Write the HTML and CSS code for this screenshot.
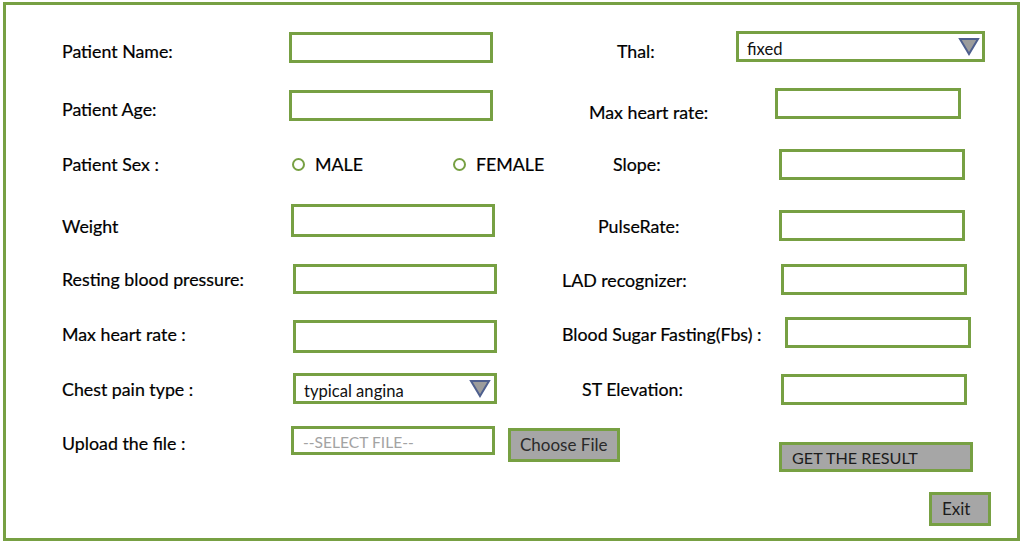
FILE: index.html
```html
<!DOCTYPE html>
<html lang="en">
<head>
<meta charset="utf-8">
<title>Heart Disease Prediction Form</title>
<link rel="stylesheet" href="styles.css">
</head>
<body>
<div class="frame">
  <div class="row r1">
    <span class="lab lab-l">Patient Name:</span>
    <input class="field in1" type="text">
    <span class="lab lab-r">Thal:</span>
    <div class="field dropdown in2 thal"><span class="val">fixed</span><svg class="tri" width="22" height="19" viewBox="0 0 22 19"><polygon points="2,2 20,2 11,17" fill="#9c9c9c" stroke="#4e5f8e" stroke-width="2" stroke-linejoin="miter"/></svg></div>
  </div>
  <div class="row r2">
    <span class="lab lab-l">Patient Age:</span>
    <input class="field in1" type="text">
    <span class="lab lab-r">Max heart rate:</span>
    <input class="field in2" type="text">
  </div>
  <div class="row r3">
    <span class="lab lab-l">Patient Sex :</span>
    <div class="radios">
      <span class="radio male"><span class="dot"></span>MALE</span>
      <span class="radio"><span class="dot"></span>FEMALE</span>
    </div>
    <span class="lab lab-r">Slope:</span>
    <input class="field in2" type="text">
  </div>
  <div class="row r4">
    <span class="lab lab-l">Weight</span>
    <input class="field in1" type="text">
    <span class="lab lab-r">PulseRate:</span>
    <input class="field in2" type="text">
  </div>
  <div class="row r5">
    <span class="lab lab-l">Resting blood pressure:</span>
    <input class="field in1" type="text">
    <span class="lab lab-r">LAD recognizer:</span>
    <input class="field in2" type="text">
  </div>
  <div class="row r6">
    <span class="lab lab-l">Max heart rate :</span>
    <input class="field in1" type="text">
    <span class="lab lab-r">Blood Sugar Fasting(Fbs) :</span>
    <input class="field in2" type="text">
  </div>
  <div class="row r7">
    <span class="lab lab-l">Chest pain type :</span>
    <div class="field dropdown in1 chest"><span class="val">typical angina</span><svg class="tri" width="22" height="19" viewBox="0 0 22 19"><polygon points="2,2 20,2 11,17" fill="#9c9c9c" stroke="#4e5f8e" stroke-width="2" stroke-linejoin="miter"/></svg></div>
    <span class="lab lab-r">ST Elevation:</span>
    <input class="field in2" type="text">
  </div>
  <div class="row r8">
    <span class="lab lab-l">Upload the file :</span>
    <div class="field in1 upload"><span class="placeholder">--SELECT FILE--</span></div>
    <button class="btn choose" type="button">Choose File</button>
    <button class="btn result" type="button">GET THE RESULT</button>
  </div>
  <div class="row r9">
    <button class="btn exit" type="button">Exit</button>
  </div>
</div>
</body>
</html>
```

FILE: styles.css
```css
html, body {
  margin: 0;
  padding: 0;
  background: #ffffff;
}

body {
  font-family: Lato, "Liberation Sans", sans-serif;
  color: #000000;
}

.frame {
  box-sizing: border-box;
  width: 1017px;
  height: 539px;
  margin: 2px 0 0 3px;
  border: 3px solid #77a043;
  padding: 26px 0 0 56px;
}

.row {
  display: flex;
  align-items: flex-start;
  height: var(--h);
}

.lab {
  font-size: 17.8px;
  line-height: 20px;
  white-space: nowrap;
  -webkit-text-stroke: 0.2px #000000;
  margin-top: calc(var(--cy) - 4px);
}

.lab-l {
  flex: none;
  width: calc(var(--x1) - 62px);
}

.lab-r {
  flex: none;
  margin-left: calc(var(--x2) - var(--x1) - 204px);
  width: calc(var(--x3) - var(--x2));
  margin-top: calc(var(--cy2, var(--cy)) - 4px);
}

.field {
  box-sizing: border-box;
  flex: none;
  margin: 0;
  border: 3px solid #77a043;
  background: #ffffff;
  outline: none;
  font-family: Lato, "Liberation Sans", sans-serif;
}

.in1 {
  width: 204px;
  height: var(--h1, 31px);
  margin-top: var(--y1);
}

.in2 {
  width: 186px;
  height: var(--h2, 31px);
  margin-top: var(--y2);
}

.dropdown {
  display: flex;
  align-items: center;
  justify-content: space-between;
  padding: 4px 2px 0 8px;
  font-size: 16.6px;
  line-height: 20px;
  color: #111111;
}

.dropdown .tri {
  flex: none;
  margin-top: -4px;
}

.thal {
  width: 249px;
}

.chest .tri {
  margin-right: 1px;
}

.upload {
  display: flex;
  align-items: center;
  padding: 2px 0 0 9px;
  font-size: 15.6px;
  line-height: 20px;
}

.placeholder {
  color: #a3a3a3;
}

.radios {
  flex: none;
  width: 204px;
  display: flex;
  align-items: flex-start;
  font-size: 17.8px;
  line-height: 20px;
  -webkit-text-stroke: 0.2px #000000;
  margin-top: calc(var(--cy) - 4px);
}

.radio {
  flex: none;
  display: flex;
  align-items: center;
  white-space: nowrap;
}

.radio.male {
  width: 161px;
}

.dot {
  flex: none;
  box-sizing: border-box;
  width: 13px;
  height: 13px;
  border: 2px solid #77a043;
  border-radius: 50%;
  margin-right: 10px;
  margin-top: 0;
  -webkit-text-stroke: 0;
}

.btn {
  box-sizing: border-box;
  flex: none;
  margin: 0;
  border: 3px solid #77a043;
  background: #a6a6a6;
  color: #1c1c1c;
  font-family: Lato, "Liberation Sans", sans-serif;
  font-size: 17px;
  line-height: 20px;
  text-align: left;
  white-space: nowrap;
  cursor: pointer;
}

.choose {
  width: 112px;
  height: 34px;
  margin-left: 13px;
  margin-top: 2px;
  padding: 0 0 0 9px;
  color: #2a2a2a;
}

.result {
  width: 194px;
  height: 30px;
  margin-left: 159px;
  margin-top: 16px;
  padding: 2px 0 0 10px;
  font-size: 16.2px;
}

.exit {
  width: 62px;
  height: 34px;
  margin-left: 867px;
  padding: 0 0 0 10px;
}

.r1 { --h: 57px; --x1: 289px; --x2: 617px; --x3: 736px; --cy: 14px; --y1: 1px; --y2: 0px; }
.r2 { --h: 61px; --x1: 289px; --x2: 589px; --x3: 775px; --cy: 15px; --cy2: 18px; --y1: 2px; --y2: 0px; }
.r3 { --h: 55px; --x1: 292px; --x2: 613px; --x3: 779px; --cy: 9px; --y2: 0px; }
.r4 { --h: 60px; --x1: 291px; --x2: 598px; --x3: 779px; --cy: 16px; --y1: 0px; --h1: 33px; --y2: 6px; }
.r5 { --h: 52px; --x1: 293px; --x2: 562px; --x3: 781px; --cy: 9px; --cy2: 10px; --y1: 0px; --h1: 30px; --y2: 0px; }
.r6 { --h: 57px; --x1: 293px; --x2: 562px; --x3: 785px; --cy: 12px; --y1: 4px; --h1: 33px; --y2: 1px; }
.r7 { --h: 53px; --x1: 293px; --x2: 582px; --x3: 781px; --cy: 10px; --y1: 0px; --y2: 1px; }
.r8 { --h: 66px; --x1: 291px; --cy: 11px; --y1: 0px; --h1: 29px; }
.r9 { --h: 40px; }
```
